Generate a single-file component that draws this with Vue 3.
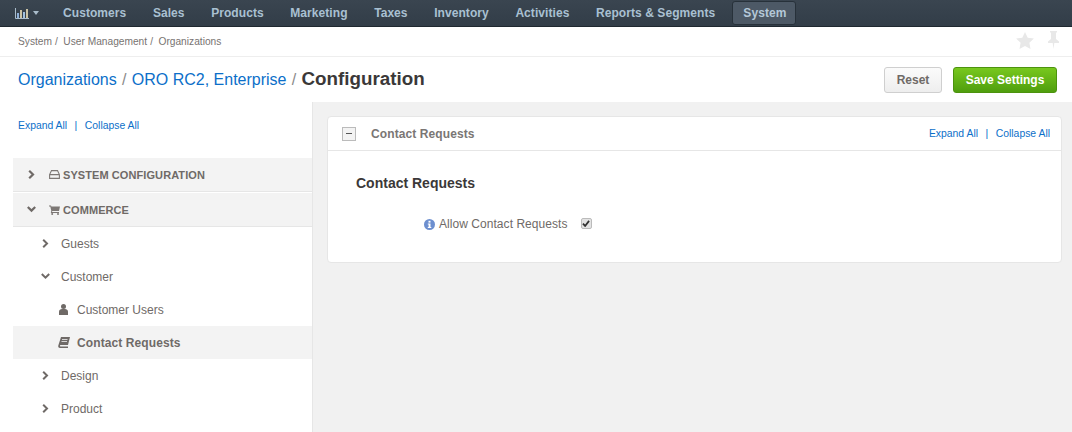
<script setup>
const navItems = [
  { label: 'Customers' }, { label: 'Sales' }, { label: 'Products' }, { label: 'Marketing' },
  { label: 'Taxes' }, { label: 'Inventory' }, { label: 'Activities' }, { label: 'Reports & Segments' },
  { label: 'System', active: true }
]
</script>

<template>
  <div class="page">
    <header class="nav">
      <div class="nav-dash">
        <svg width="14" height="11" viewBox="0 0 14 11" class="chart">
          <path d="M0.5 0v10.5H14" fill="none" stroke="#a9bccb" />
          <rect x="2" y="5" width="2" height="5" fill="#8fb0d8" />
          <rect x="5" y="2" width="2" height="8" fill="#c9c2a5" />
          <rect x="8" y="4" width="2" height="6" fill="#9fc0e0" />
          <rect x="11" y="1" width="2" height="9" fill="#c9c2a5" />
        </svg>
        <span class="caret"></span>
      </div>
      <a v-for="item in navItems" :key="item.label" class="nav-item" :class="{ active: item.active }">{{ item.label }}</a>
    </header>

    <div class="crumbs">
      <div class="crumb-text">
        <span>System</span><i>/</i><span>User Management</span><i>/</i><span>Organizations</span>
      </div>
      <div class="crumb-icons">
        <svg width="18" height="17" viewBox="0 0 18 17"><path d="M9 0l2.700 5.700 6.200.8-4.500 4.300 1.100 6.200L9 14l-5.500 3 1.100-6.200L.1 6.500l6.200-.8z" fill="#e8e8e8" /></svg>
        <svg width="11" height="18" viewBox="0 0 11 18"><path d="M2 0h7v1.500H8V8l3 2.500V12H6.300L5.500 18l-.8-6H0v-1.500L3 8V1.500H2z" fill="#e8e8e8" /></svg>
      </div>
    </div>

    <div class="title-row">
      <h1 class="title">
        <a>Organizations</a><i>/</i><a>ORO RC2, Enterprise</a><i>/</i><b>Configuration</b>
      </h1>
      <div class="actions">
        <button class="btn reset">Reset</button>
        <button class="btn save">Save Settings</button>
      </div>
    </div>

    <div class="body">
      <aside class="side">
        <div class="links side-links"><a>Expand All</a><i>|</i><a>Collapse All</a></div>
        <div class="tree">
          <div class="sec">
            <svg class="chev" width="7" height="9" viewBox="0 0 7 9"><path d="M1.200 .8l3.800 3.700-3.800 3.700" fill="none" stroke="#6f6a67" stroke-width="2.200" /></svg>
            <svg class="sec-ico" width="11" height="9" viewBox="0 0 11 9"><path d="M2.500 .6h6l1.900 4v3.800H.6V4.600zM.6 4.600h9.800" fill="none" stroke="#7d7875" stroke-width="1.100" /></svg>
            <span>SYSTEM CONFIGURATION</span>
          </div>
          <div class="sec">
            <svg class="chev" width="9" height="7" viewBox="0 0 9 7"><path d="M.8 1l3.700 3.600L8.200 1" fill="none" stroke="#6f6a67" stroke-width="2.200" /></svg>
            <svg class="sec-ico" width="11" height="10" viewBox="0 0 11 10"><path d="M0 .5h2l.4 1H11L10 6H3.300L3 7h7v1H1.800L2.300 6 1.300 1.500H0z" fill="#7d7875" /><circle cx="3.200" cy="9" r="1" fill="#7d7875" /><circle cx="9" cy="9" r="1" fill="#7d7875" /></svg>
            <span>COMMERCE</span>
          </div>
          <div class="row lv1">
            <svg class="chev-sm" width="7" height="9" viewBox="0 0 7 9"><path d="M1.200 .8l3.800 3.700-3.800 3.700" fill="none" stroke="#6f6a67" stroke-width="2" /></svg>
            <span>Guests</span>
          </div>
          <div class="row lv1">
            <svg class="chev-sm" width="9" height="7" viewBox="0 0 9 7"><path d="M.8 1l3.700 3.600L8.200 1" fill="none" stroke="#6f6a67" stroke-width="2" /></svg>
            <span>Customer</span>
          </div>
          <div class="row lv2">
            <svg class="leaf user" width="9" height="11" viewBox="0 0 9 11"><circle cx="4.500" cy="2.500" r="2.500" fill="#6f6a67" /><path d="M0 11V7.500C0 6 1.500 5 3 5h3c1.500 0 3 1 3 2.500V11z" fill="#6f6a67" /></svg>
            <span>Customer Users</span>
          </div>
          <div class="row lv2 current">
            <svg class="leaf" width="12" height="11" viewBox="0 0 12 11"><path d="M3 0h9l-2 8H2.500C1.800 8 1.800 9.500 2.500 9.500H10V11H2C.5 11 0 10 .3 8.500z" fill="#6f6a67" /><path d="M4 2.500h5.500M3.500 4.500H9" stroke="#f1f1f1" stroke-width=".8" /></svg>
            <span>Contact Requests</span>
          </div>
          <div class="row lv1">
            <svg class="chev-sm" width="7" height="9" viewBox="0 0 7 9"><path d="M1.200 .8l3.800 3.700-3.800 3.700" fill="none" stroke="#6f6a67" stroke-width="2" /></svg>
            <span>Design</span>
          </div>
          <div class="row lv1">
            <svg class="chev-sm" width="7" height="9" viewBox="0 0 7 9"><path d="M1.200 .8l3.800 3.700-3.800 3.700" fill="none" stroke="#6f6a67" stroke-width="2" /></svg>
            <span>Product</span>
          </div>
        </div>
      </aside>

      <main class="content">
        <section class="card">
          <div class="card-head">
            <span class="toggle"><span></span></span>
            <span class="card-title">Contact Requests</span>
            <div class="links head-links"><a>Expand All</a><i>|</i><a>Collapse All</a></div>
          </div>
          <div class="card-body">
            <h3>Contact Requests</h3>
            <div class="field">
              <svg width="11" height="11" viewBox="0 0 11 11" class="info">
                <circle cx="5.500" cy="5.500" r="5.500" fill="#6d8fcf" />
                <rect x="4.500" y="1.800" width="2" height="1.800" fill="#fff" />
                <path d="M3.800 4.500h2.700v3.500h.8v1H3.800V8h.8V5.500h-.8z" fill="#fff" />
              </svg>
              <label>Allow Contact Requests</label>
              <span class="check">
                <svg width="8" height="7" viewBox="0 0 9 8"><path d="M1 4.200l2.500 2.600L8 1" fill="none" stroke="#333" stroke-width="2" /></svg>
              </span>
            </div>
          </div>
        </section>
      </main>
    </div>
  </div>
</template>

<style>
html, body { margin: 0; padding: 0; background: #fff; overflow: hidden; }
</style>

<style scoped>
.page { width: 1072px; height: 432px; display: flex; flex-direction: column; overflow: hidden; font-family: "Liberation Sans", Arial, sans-serif; color: #6f6a67; }
a { color: inherit; text-decoration: none; }
i { font-style: normal; }

.nav { height: 26px; flex: none; display: flex; align-items: center; background: linear-gradient(#3a4550, #323d48); border-bottom: 1px solid #1f2830; padding-left: 15px; }
.nav-dash { display: flex; align-items: center; width: 48px; flex: none; }
.caret { width: 0; height: 0; border: 3.500px solid transparent; border-top: 4px solid #a9bccb; border-bottom: 0; margin-left: 4px; }
.nav-item { font-size: 12px; font-weight: 700; color: #a9c0d2; letter-spacing: .07px; margin-right: 26.550px; line-height: 22px; white-space: nowrap; }
.nav-item.active { margin-left: -9.500px; padding: 0 9px 0 10px; height: 22px; background: #4d5966; border: 1px solid #27313a; border-radius: 3px; color: #b4c8d8; }

.crumbs { height: 29px; flex: none; display: flex; align-items: center; justify-content: space-between; border-bottom: 1px solid #eeeeee; padding: 0 13px 0 18px; }
.crumb-text { font-size: 10.200px; color: #777371; }
.crumb-text i { margin: 0 5.500px 0 3px; }
.crumb-icons { display: flex; gap: 14px; align-items: center; margin-top: -3px; }

.title-row { height: 45px; flex: none; display: flex; align-items: center; justify-content: space-between; padding: 0 15px 0 18px; }
.title { margin: -2px 0 0; font-size: 16px; font-weight: 400; color: #0c6fc9; display: flex; align-items: baseline; }
.title i { color: #8a8a8a; margin: 0 5.300px; }
.title b { font-size: 18.800px; color: #3b3838; font-weight: 700; }
.actions { display: flex; gap: 11px; margin-top: 1px; }
.btn { height: 26px; font-family: inherit; font-size: 12px; font-weight: 700; border-radius: 3px; padding: 0; cursor: pointer; }
.reset { width: 58px; background: linear-gradient(#fbfbfb, #eeeeee); border: 1px solid #cfcfcf; color: #6f6a67; }
.save { width: 104px; background: linear-gradient(#78c81e, #4f9e0e); border: 1px solid #4c930e; color: #fff; }

.body { flex: 1; display: flex; min-height: 0; background: #f1f1f1; }
.side { width: 312px; flex: none; background: #fff; border-right: 1px solid #e6e6e6; }
.links { font-size: 10.400px; color: #0c6fc9; }
.links i { margin: 0 7.500px; }
.side-links { padding: 18px 0 0 18px; height: 38px; line-height: 12px; }
.tree { margin-left: 13px; }
.sec { height: 33px; background: #f3f3f3; border-bottom: 1px solid #e6e6e6; display: flex; align-items: center; font-size: 11px; font-weight: 700; color: #6f6a67; letter-spacing: .08px; padding-left: 14px; }
.sec + .sec { margin-top: 1px; }
.chev { width: 9px; margin-right: 13px; }
.sec-ico { margin-right: 3px; }
.row { height: 33px; display: flex; align-items: center; font-size: 12px; color: #6f6a67; }
.lv1 { padding-left: 28px; }
.chev-sm { width: 9px; margin-right: 11px; }
.lv2 { padding-left: 45px; }
.leaf { width: 12px; margin-right: 7px; }
.leaf.user { width: 9px; margin-left: 1px; margin-right: 9px; }
.current { background: #f3f3f3; font-weight: 700; letter-spacing: .1px; }

.content { flex: 1; padding: 14px 10px 0 14px; min-width: 0; }
.card { height: 147px; background: #fff; border: 1px solid #e6e6e6; border-radius: 4px; box-sizing: border-box; }
.card-head { height: 33px; border-bottom: 1px solid #e6e6e6; display: flex; align-items: center; padding: 0 11px 0 14px; }
.toggle { width: 14px; height: 14px; box-sizing: border-box; border: 1px solid #bbb; background: #f3f3f3; display: flex; align-items: center; justify-content: center; margin-right: 15px; }
.toggle span { width: 6px; height: 1px; background: #555; }
.card-title { font-size: 12px; font-weight: 700; color: #7a7674; flex: 1; letter-spacing: .1px; }
.card-body { padding: 0 28px; }
h3 { margin: 24px 0 0; font-size: 14px; line-height: 16px; font-weight: 700; color: #3b3838; }
.field { display: flex; align-items: center; margin: 24px 0 0 68px; height: 18px; font-size: 12px; color: #6f6a67; }
.info { margin-right: 4px; }
label { letter-spacing: .05px; }
.check { width: 11px; height: 11px; box-sizing: border-box; margin-left: 13px; margin-top: -2px; background: #e3e3e3; border: 1px solid #bbb; border-radius: 2px; display: flex; align-items: center; justify-content: center; }
</style>
